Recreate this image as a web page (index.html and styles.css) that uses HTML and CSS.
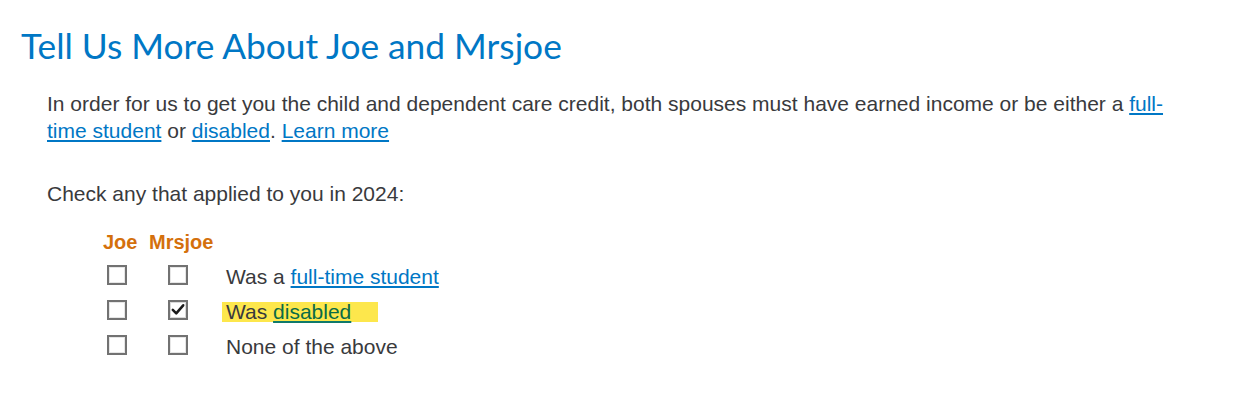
FILE: index.html
```html
<!DOCTYPE html>
<html>
<head>
<meta charset="utf-8">
<link rel="stylesheet" href="styles.css">
</head>
<body>
<main class="page">
  <h1 class="title">Tell Us More About Joe and Mrsjoe</h1>
  <div class="content">
    <p class="intro">In order for us to get you the child and dependent care credit, both spouses must have earned income or be either a <a href="#">full-time student</a> or <a href="#">disabled</a>. <a href="#">Learn more</a></p>
    <p class="prompt">Check any that applied to you in 2024:</p>
    <div class="grid">
      <div class="head">Joe</div>
      <div class="head">Mrsjoe</div>
      <div></div>

      <div class="cell c1"><span class="box"></span></div>
      <div class="cell c2"><span class="box"></span></div>
      <div class="label">Was a <a href="#">full-time student</a></div>

      <div class="cell c1"><span class="box"></span></div>
      <div class="cell c2"><span class="box checked"><svg viewBox="0 0 20 20" width="17" height="17"><path d="M3.5 10.5 L7.8 14.8 L16.5 4.8" fill="none" stroke="#1a1a1a" stroke-width="3.2" stroke-linecap="round" stroke-linejoin="round"/></svg></span></div>
      <div class="label"><span class="hl">Was <a href="#" class="green">disabled</a></span></div>

      <div class="cell c1"><span class="box"></span></div>
      <div class="cell c2"><span class="box"></span></div>
      <div class="label">None of the above</div>
    </div>
  </div>
</main>
</body>
</html>
```
FILE: styles.css
```css
html, body {
  margin: 0;
  padding: 0;
  background: #ffffff;
}
.page {
  padding: 24px 0 0 21px;
  font-family: "Liberation Sans", Arial, sans-serif;
  color: #393a3d;
}
.title {
  margin: 0;
  font-family: Lato, "Noto Sans", sans-serif;
  font-weight: 400;
  font-size: 35.3px;
  line-height: 44px;
  color: #0077c5;
}
.content {
  padding-left: 26px;
}
.intro {
  margin: 22px 0 0 0;
  font-size: 21px;
  line-height: 27px;
  max-width: 1130px;
}
a {
  color: #0077c5;
  text-decoration: underline;
}
.prompt {
  margin: 36px 0 0 0;
  font-size: 21px;
  line-height: 27px;
}
.grid {
  margin: 20px 0 0 56px;
  display: grid;
  grid-template-columns: 46px 73px auto;
  grid-template-rows: 30px;
  grid-auto-rows: 35px;
  align-items: center;
}
.head {
  font-weight: 700;
  font-size: 20px;
  color: #d4700c;
}
.cell {
  display: flex;
  align-items: center;
}
.c1 { padding-left: 4px; }
.c2 { padding-left: 19px; }
.box {
  width: 16px;
  height: 16px;
  border: 2px solid #727272;
  box-shadow: inset 0 0 0 1px #e6e6e6;
  background: #fff;
  display: flex;
  align-items: center;
  justify-content: center;
}
.box.checked {
  box-shadow: inset 0 0 0 1px #d9d9d9;
}
.label {
  font-size: 21px;
  line-height: 20px;
  padding: 4px 0 0 4px;
}
.hl {
  display: inline-block;
  background: #fde74c;
  margin-left: -4px;
  padding: 0 27px 0 4px;
  line-height: 20px;
}
.green {
  color: #0a6b47;
  text-decoration-color: #0f7a6a;
}
```
